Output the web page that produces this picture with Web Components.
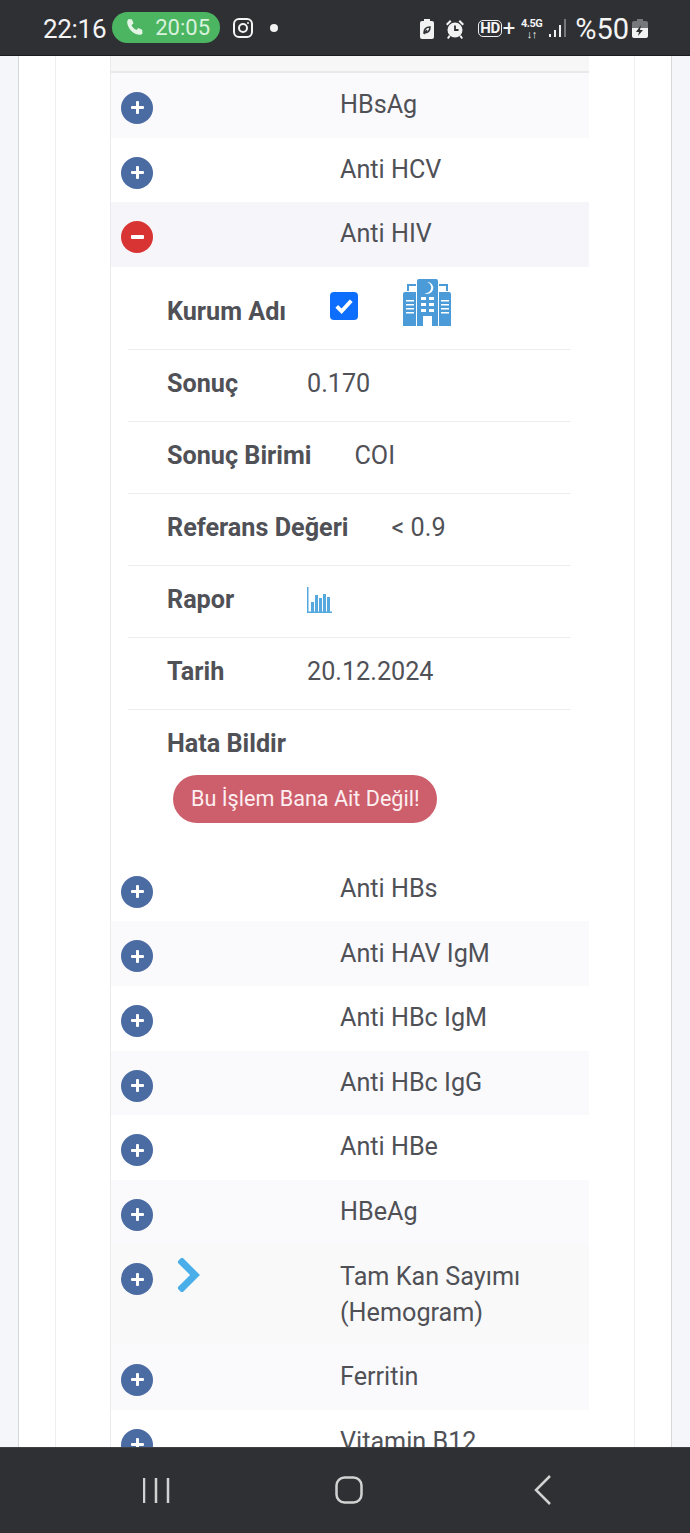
<!DOCTYPE html>
<html lang="tr">
<head>
<meta charset="utf-8">
<title>Tahlil Sonuçları</title>
<style>
    html, body { margin: 0; padding: 0; background: #f5f6fa; }
    body { font-family: Roboto, "Liberation Sans", sans-serif; }
</style>
</head>
<body>
<phone-frame>
    <status-bar slot="top"></status-bar>

    <test-row name="HBsAg" striped></test-row>
    <test-row name="Anti HCV"></test-row>
    <test-row name="Anti HIV" open></test-row>
    <test-detail>
        <detail-row label="Kurum Adı" tall>
            <check-mark></check-mark>
            <svg style="margin-left:45px;display:block" width="48" height="48" viewBox="0 0 48 48">
                <path fill="#4a9bd8" d="M14 2q0-2 2-2h17q2 0 2 2v45h-6V37H20v10h-6zM0 15q0-2 2-2h11v34H0zM36 13h10q2 0 2 2v32H36zM4 5h9v2H6v5H4zM36 5h9v7h-2V7h-7z"/>
                <path fill="#fff" d="M24 3a6 6 0 1 1-3 11 5 5 0 0 0 3-11zM18 18h5v3h-5zM26 18h5v3h-5zM18 24h5v3h-5zM26 24h5v3h-5zM18 30h5v3h-5zM26 30h5v3h-5zM3 21h8v1.500H3zM3 25h8v1.500H3zM3 29h8v1.500H3zM3 33h8v1.500H3zM38 21h8v1.500h-8zM38 25h8v1.500h-8zM38 29h8v1.500h-8zM38 33h8v1.500h-8zM23 37h1.500v10H23zM25.500 37H27v10h-1.500z"/>
            </svg>
        </detail-row>
        <detail-row label="Sonuç">0.170</detail-row>
        <detail-row label="Sonuç Birimi">COI</detail-row>
        <detail-row label="Referans Değeri">&lt; 0.9</detail-row>
        <detail-row label="Rapor">
            <svg width="26" height="26" viewBox="0 0 26 26" style="display:block">
                <path fill="#55a9df" d="M0 0h1.500v24.500H25V26H0zM4 15h3v10H4zM8 8h3v17H8zM12 11h3v14h-3zM16 7h3v18h-3zM20 10h3v15h-3z"/>
            </svg>
        </detail-row>
        <detail-row label="Tarih">20.12.2024</detail-row>
        <detail-row label="Hata Bildir" last></detail-row>
        <pill-button>Bu İşlem Bana Ait Değil!</pill-button>
    </test-detail>
    <test-row name="Anti HBs"></test-row>
    <test-row name="Anti HAV IgM" striped></test-row>
    <test-row name="Anti HBc IgM"></test-row>
    <test-row name="Anti HBc IgG" striped></test-row>
    <test-row name="Anti HBe"></test-row>
    <test-row name="HBeAg" striped></test-row>
    <test-row name="Tam Kan Sayımı (Hemogram)" chevron></test-row>
    <test-row name="Ferritin" striped></test-row>
    <test-row name="Vitamin B12"></test-row>

    <nav-bar slot="bottom"></nav-bar>
</phone-frame>

<script>
class PhoneFrame extends HTMLElement {
    constructor() {
        super();
        this.attachShadow({ mode: 'open' });
        this.shadowRoot.innerHTML = `
            <style>
                :host { display: flex; flex-direction: column; height: 1533px; overflow: hidden; }
                .page { flex: 1; min-height: 0; overflow: hidden; padding: 0 18px; background: #f5f6fa; }
                .card { height: 100%; background: #fff; border-left: 1px solid #d6d7da; border-right: 1px solid #d6d7da; padding: 0 36px; }
                .inner { height: 100%; border-left: 1px solid #eeeef0; border-right: 1px solid #eeeef0; padding: 0 45px 0 55px; }
                .table { border-left: 1px solid #ebebee; margin-left: -1px; }
                .head { height: 15px; background: #f7f7f8; border-bottom: 2px solid #e9e9eb; }
            </style>
            <slot name="top"></slot>
            <div class="page"><div class="card"><div class="inner"><div class="table">
                <div class="head"></div>
                <slot></slot>
            </div></div></div></div>
            <slot name="bottom"></slot>
        `;
    }
}

class StatusBar extends HTMLElement {
    constructor() {
        super();
        this.attachShadow({ mode: 'open' });
        this.shadowRoot.innerHTML = `
            <style>
                :host { display: flex; align-items: center; height: 56px; box-sizing: border-box; padding: 2px 42px 0 43px; background: #2f3034; color: #f4f4f4; border-bottom: 1px solid #1c1c1f; }
                .time { font-size: 26px; letter-spacing: -0.3px; }
                .pill { display: flex; align-items: center; gap: 11px; height: 31px; width: 108px; box-sizing: border-box; margin: -3px 0 0 6px; padding-left: 14px; border-radius: 16px; background: #4cb562; color: #d9f2dc; font-size: 22px; }
                .insta { margin: -2px 0 0 13px; }
                .dot { width: 8px; height: 8px; border-radius: 50%; background: #f2f2f2; margin: -2px 0 0 17px; }
                .right { margin-left: auto; display: flex; align-items: center; }
                .hd { font-size: 15px; font-weight: 700; line-height: 15px; border: 1.500px solid #f0f0f0; border-radius: 5px; padding: 0 1px; margin-left: 13px; letter-spacing: -0.5px; }
                .plus { font-size: 22px; line-height: 22px; margin-left: 1px; }
                .net { font-size: 11px; font-weight: 700; line-height: 11px; text-align: center; margin-left: 5px; width: 23px; letter-spacing: -0.5px; }
                .pct { font-size: 29px; margin-left: 8px; }
            </style>
            <span class="time">22:16</span>
            <span class="pill">
                <svg width="18" height="18" viewBox="0 0 18 18"><path fill="#e4f5e6" d="M3 1l3 .5 1.500 4-2 1.500c.8 2 2.500 4 5 5l1.700-2 4 1.800.3 3.200c-.3 1.500-2 2-3.500 1.800C7 16 2 10.500 1.200 5 1 3 1.700 1.500 3 1z"/></svg>
                20:05
            </span>
            <svg class="insta" width="20" height="20" viewBox="0 0 20 20" fill="none" stroke="#f4f4f4" stroke-width="2">
                <rect x="1" y="1" width="18" height="18" rx="5"/>
                <circle cx="10" cy="10" r="4"/>
                <circle cx="15" cy="5" r=".6" fill="#f4f4f4" stroke-width="1"/>
            </svg>
            <span class="dot"></span>
            <span class="right">
                <svg width="14" height="20" viewBox="0 0 14 20"><path fill="#f2f2f2" d="M4 0h6v2h2q2 0 2 2v14q0 2-2 2H2q-2 0-2-2V4q0-2 2-2h2z"/><path fill="none" stroke="#2f3034" stroke-width="1.500" d="M4 14c0-4 2-6 6-6 0 4-2 6-6 6zM4 15l3-4"/></svg>
                <svg style="margin-left:11px" width="20" height="20" viewBox="0 0 20 20"><circle cx="10" cy="11" r="7.500" fill="#f2f2f2"/><path d="M1 5l4-4 1.500 1.500-4 4zM19 5l-4-4-1.500 1.500 4 4zM4 16l-2 3 1.500 1 2-2.500zM16 16l2 3-1.500 1-2-2.500z" fill="#f2f2f2"/><path d="M10 6.500V11h3.500" fill="none" stroke="#2f3034" stroke-width="1.800"/></svg>
                <span class="hd">HD</span><span class="plus">+</span>
                <span class="net">4.5G<br>↓↑</span>
                <svg style="margin-left:6px" width="18" height="19" viewBox="0 0 18 19"><path fill="#f2f2f2" d="M0 15h2v3H0zM5 11h2v7H5zM10 6h2v12h-2z"/><path fill="#77787b" d="M15 0h2v18h-2z"/></svg>
                <span class="pct">%50</span>
                <svg style="margin-left:3px" width="16" height="19" viewBox="0 0 16 19"><path fill="#77787b" d="M5 0h6v2h3q2 0 2 2v6H0V4q0-2 2-2h3z"/><path fill="#f2f2f2" d="M0 9h16v8q0 2-2 2H2q-2 0-2-2z"/><path fill="#2f3034" d="M9 6l-5 7h3l-1 4 5-6H8z"/></svg>
            </span>
        `;
    }
}

class TestRow extends HTMLElement {
    constructor() {
        super();
        this.attachShadow({ mode: 'open' });
        this.shadowRoot.innerHTML = `
            <style>
                :host { display: grid; grid-template-columns: 229px 1fr; padding: 14.300px 0; font-size: 25.200px; line-height: 36px; color: #505157; background: #fff; }
                :host([striped]) { background: #fafafd; }
                :host([open]) { background: #f6f6fa; }
                :host([chevron]) { background: #f9f9f9; }
                .tools { display: flex; align-items: flex-start; height: 36px; padding-left: 10px; }
                .toggle { flex: none; width: 32px; height: 32px; margin-top: 4.700px; border-radius: 50%; background: #4b6ba3; position: relative; }
                .toggle::before, .toggle::after { content: ""; position: absolute; background: #fff; border-radius: 1px; }
                .toggle::before { left: 9.500px; right: 9.500px; top: 14.500px; height: 3px; }
                .toggle::after { top: 9.500px; bottom: 9.500px; left: 14.500px; width: 3px; }
                :host([open]) .toggle { background: #d93434; }
                :host([open]) .toggle::after { display: none; }
                :host([open]) .toggle::before { height: 4px; top: 14px; }
                .chev { margin: -1px 0 0 25px; display: none; }
                :host([chevron]) .chev { display: block; }
            </style>
            <div class="tools">
                <div class="toggle"></div>
                <svg class="chev" width="22" height="34" viewBox="0 0 22 34"><path d="M4 4l13 13L4 30" fill="none" stroke="#4aaee8" stroke-width="7" stroke-linecap="square"/></svg>
            </div>
            <div class="name"></div>
        `;
    }

    connectedCallback() {
        this.shadowRoot.querySelector('.name').textContent = this.getAttribute('name');
    }
}

class TestDetail extends HTMLElement {
    constructor() {
        super();
        this.attachShadow({ mode: 'open' });
        this.shadowRoot.innerHTML = `
            <style>
                :host { display: block; height: 590px; padding: 0 18px 0 17px; box-sizing: border-box; background: #fff; }
            </style>
            <slot></slot>
        `;
    }
}

class DetailRow extends HTMLElement {
    constructor() {
        super();
        this.attachShadow({ mode: 'open' });
        this.shadowRoot.innerHTML = `
            <style>
                :host { display: flex; align-items: center; height: 72px; box-sizing: border-box; padding: 0 0 2px 39px; border-bottom: 1px solid #ededf0; font-size: 25.200px; line-height: 36px; color: #505157; }
                :host([tall]) { height: 83px; align-items: flex-start; padding-top: 12px; }
                :host([tall]) .label { margin-top: 15px; }
                :host([last]) { border-bottom: 0; height: 65px; padding: 3px 0 0 39px; }
                .label { font-weight: 700; min-width: 97px; padding-right: 43px; }
                .value { display: flex; align-items: flex-start; }
            </style>
            <span class="label"></span>
            <span class="value"><slot></slot></span>
        `;
    }

    connectedCallback() {
        this.shadowRoot.querySelector('.label').textContent = this.getAttribute('label');
    }
}

class CheckMark extends HTMLElement {
    constructor() {
        super();
        this.attachShadow({ mode: 'open' });
        this.shadowRoot.innerHTML = `
            <style>
                :host { display: block; width: 28px; height: 28px; border-radius: 4px; background: #0d6efd; margin: 13px 0 0 1px; }
                svg { display: block; }
            </style>
            <svg width="28" height="28" viewBox="0 0 29 29"><path d="M7 15l5 5 10-11" fill="none" stroke="#fff" stroke-width="4"/></svg>
        `;
    }
}

class PillButton extends HTMLElement {
    constructor() {
        super();
        this.attachShadow({ mode: 'open' });
        this.shadowRoot.innerHTML = `
            <style>
                :host { display: block; width: max-content; margin: 0 0 0 45px; padding: 0 17px 0 18px; height: 48px; line-height: 48px; border-radius: 24px; background: #cd5f6c; color: #fdeef0; font-size: 21.600px; }
            </style>
            <slot></slot>
        `;
    }
}

class NavBar extends HTMLElement {
    constructor() {
        super();
        this.attachShadow({ mode: 'open' });
        this.shadowRoot.innerHTML = `
            <style>
                :host { display: flex; align-items: center; height: 86px; box-sizing: border-box; padding: 0 0 2px 143px; background: #2f3034; border-top: 1px solid #3f4044; }
                svg { display: block; flex: none; }
                .home { margin-left: 164px; }
                .back { margin-left: 171px; }
            </style>
            <svg width="28" height="28" viewBox="0 0 28 28" fill="none" stroke="#d2d2d2" stroke-width="2.500"><path d="M1 2v25M13 2v25M25 2v25"/></svg>
            <svg class="home" width="28" height="28" viewBox="0 0 28 28" fill="none" stroke="#d2d2d2" stroke-width="2.500"><rect x="1.500" y="1.500" width="25" height="25" rx="8"/></svg>
            <svg class="back" width="18" height="30" viewBox="0 0 18 30" fill="none" stroke="#d2d2d2" stroke-width="2.500"><path d="M16 1L2 15l14 14"/></svg>
        `;
    }
}

customElements.define('phone-frame', PhoneFrame);
customElements.define('status-bar', StatusBar);
customElements.define('test-row', TestRow);
customElements.define('test-detail', TestDetail);
customElements.define('detail-row', DetailRow);
customElements.define('check-mark', CheckMark);
customElements.define('pill-button', PillButton);
customElements.define('nav-bar', NavBar);
</script>
</body>
</html>
